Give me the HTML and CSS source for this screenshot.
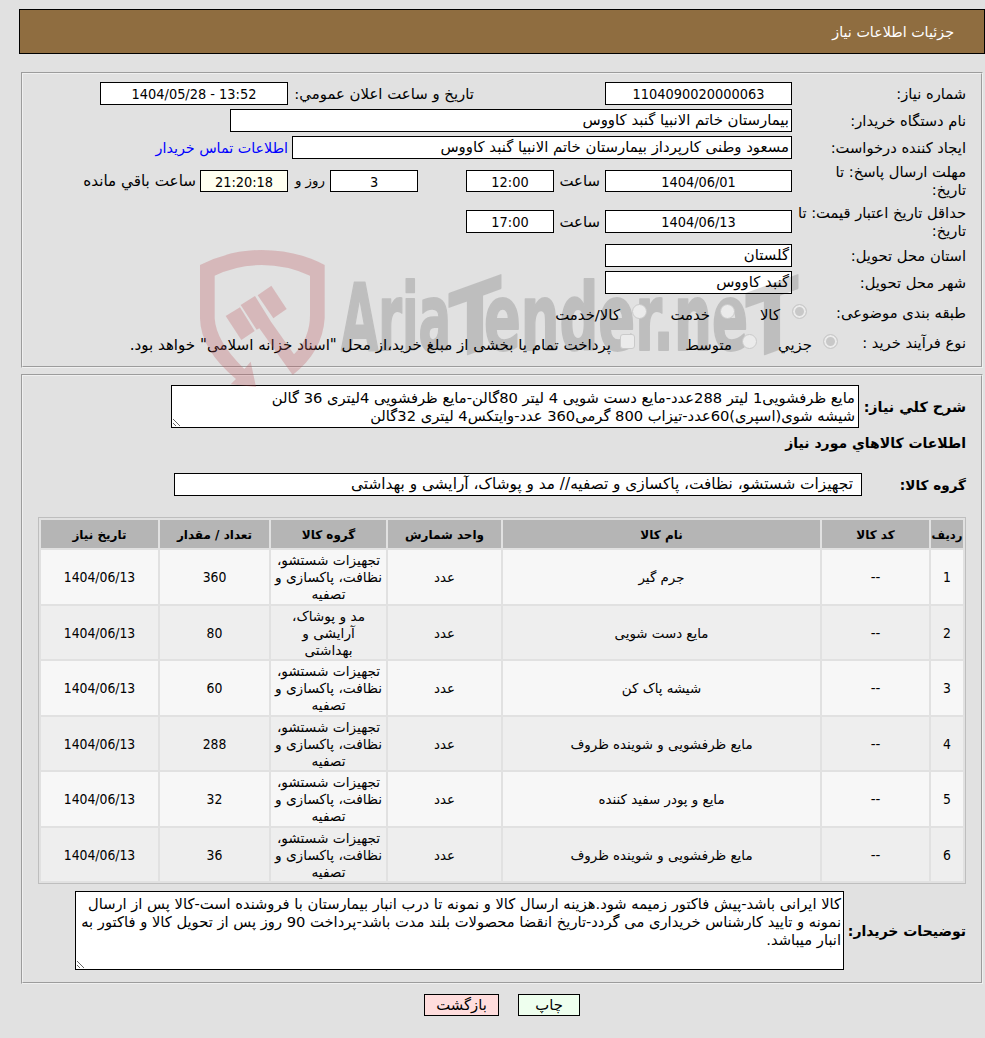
FILE: index.html
```html
<!DOCTYPE html>
<html lang="fa" dir="rtl">
  <head>
    <meta charset="UTF-8" />
    <meta name="viewport" content="width=device-width, initial-scale=1.0" />
    <title>جزئیات اطلاعات نیاز</title>
    <link rel="stylesheet" href="styles.css">
  </head>
  <body>
    <h1 class="title">جزئیات اطلاعات نیاز</h1>

    <!-- Need info -->
    <section class="box info">
      <div class="row">
        <span class="label">شماره نیاز:</span>
        <span class="field num w-main">1104090020000063</span>
        <span class="text announce">تاریخ و ساعت اعلان عمومي:</span>
        <span class="field num w-date" dir="ltr">1404/05/28 - 13:52</span>
      </div>
      <div class="row">
        <span class="label">نام دستگاه خریدار:</span>
        <span class="field w-org">بیمارستان خاتم الانبیا گنبد کاووس</span>
      </div>
      <div class="row">
        <span class="label">ایجاد کننده درخواست:</span>
        <span class="field w-user">مسعود وطنی کارپرداز بیمارستان خاتم الانبیا گنبد کاووس</span>
        <a class="contact" href="#">اطلاعات تماس خریدار</a>
      </div>
      <div class="row tall">
        <span class="label">مهلت ارسال پاسخ: تا<br>تاریخ:</span>
        <span class="field num w-main">1404/06/01</span>
        <span class="text hour">ساعت</span>
        <span class="field num w-small">12:00</span>
        <span class="field num w-small days">3</span>
        <span class="text and">روز و</span>
        <span class="field num w-small left">21:20:18</span>
        <span class="text remain">ساعت باقي مانده</span>
      </div>
      <div class="row taller">
        <span class="label">حداقل تاریخ اعتبار قیمت: تا<br>تاریخ:</span>
        <span class="field num w-main">1404/06/13</span>
        <span class="text hour">ساعت</span>
        <span class="field num w-small">17:00</span>
      </div>
      <div class="row">
        <span class="label">استان محل تحویل:</span>
        <span class="field w-main">گلستان</span>
      </div>
      <div class="row">
        <span class="label">شهر محل تحویل:</span>
        <span class="field w-main">گنبد کاووس</span>
      </div>
      <div class="row options kind">
        <span class="label short">طبقه بندی موضوعی:</span>
        <i class="radio on"></i><span class="opt k1">کالا</span>
        <i class="radio"></i><span class="opt k2">خدمت</span>
        <i class="radio"></i><span class="opt k3">کالا/خدمت</span>
      </div>
      <div class="row options process">
        <span class="label short">نوع فرآیند خرید :</span>
        <i class="radio on"></i><span class="opt p1">جزیي</span>
        <i class="radio"></i><span class="opt p2">متوسط</span>
        <i class="radio check"></i><span class="opt p3">پرداخت تمام یا بخشی از مبلغ خرید،از محل "اسناد خزانه اسلامی" خواهد بود.</span>
      </div>
    </section>

    <!-- Goods -->
    <section class="box goods">
      <div class="line desc">
        <b>شرح کلي نیاز:</b>
        <textarea class="area area-desc">مایع ظرفشویی1 لیتر 288عدد-مایع دست شویی 4 لیتر 80گالن-مایع ظرفشویی 4لیتری 36 گالن
شیشه شوی(اسپری)60عدد-تیزاب 800 گرمی360 عدد-وایتکس4 لیتری 32گالن</textarea>
      </div>
      <h2>اطلاعات کالاهاي مورد نیاز</h2>
      <div class="line group">
        <b>گروه کالا:</b>
        <span class="field w-group">تجهیزات شستشو، نظافت، پاکسازی و تصفیه// مد و پوشاک، آرایشی و بهداشتی</span>
      </div>

      <table>
        <colgroup>
          <col class="c1"><col class="c2"><col class="c3"><col class="c4"><col class="c5"><col class="c6"><col class="c7">
        </colgroup>
        <thead>
          <tr>
            <th>ردیف</th>
            <th>کد کالا</th>
            <th>نام کالا</th>
            <th>واحد شمارش</th>
            <th>گروه کالا</th>
            <th>تعداد / مقدار</th>
            <th>تاریخ نیاز</th>
          </tr>
        </thead>
        <tbody>
          <tr><td>1</td><td>--</td><td>جرم گیر</td><td>عدد</td><td>تجهیزات شستشو،<br>نظافت، پاکسازی و<br>تصفیه</td><td>360</td><td>1404/06/13</td></tr>
          <tr><td>2</td><td>--</td><td>مایع دست شویی</td><td>عدد</td><td>مد و پوشاک،<br>آرایشی و<br>بهداشتی</td><td>80</td><td>1404/06/13</td></tr>
          <tr><td>3</td><td>--</td><td>شیشه پاک کن</td><td>عدد</td><td>تجهیزات شستشو،<br>نظافت، پاکسازی و<br>تصفیه</td><td>60</td><td>1404/06/13</td></tr>
          <tr><td>4</td><td>--</td><td>مایع ظرفشویی و شوینده ظروف</td><td>عدد</td><td>تجهیزات شستشو،<br>نظافت، پاکسازی و<br>تصفیه</td><td>288</td><td>1404/06/13</td></tr>
          <tr><td>5</td><td>--</td><td>مایع و پودر سفید کننده</td><td>عدد</td><td>تجهیزات شستشو،<br>نظافت، پاکسازی و<br>تصفیه</td><td>32</td><td>1404/06/13</td></tr>
          <tr><td>6</td><td>--</td><td>مایع ظرفشویی و شوینده ظروف</td><td>عدد</td><td>تجهیزات شستشو،<br>نظافت، پاکسازی و<br>تصفیه</td><td>36</td><td>1404/06/13</td></tr>
        </tbody>
      </table>

      <div class="line notes">
        <b>توضیحات خریدار:</b>
        <textarea class="area area-notes">کالا ایرانی باشد-پیش فاکتور زمیمه شود.هزینه ارسال کالا و نمونه تا درب انبار بیمارستان با فروشنده است-کالا پس از ارسال
نمونه و تایید کارشناس خریداری می گردد-تاریخ انقضا محصولات بلند مدت باشد-پرداخت 90 روز پس از تحویل کالا و فاکتور به
انبار میباشد.</textarea>
      </div>
    </section>

    <div class="buttons">
      <button class="btn btn-print">چاپ</button>
      <button class="btn btn-back">بازگشت</button>
    </div>

    <!-- Watermark over the form -->
    <svg class="watermark" viewBox="0 0 630 155" direction="ltr">
      <g class="wm-red" transform="scale(0.33333)">
        <path d="M338 420L238 280L230 284L182 210L225 183L273 260L342 358Q390 310 390 240V122Q320 90 245 90Q170 90 104 122V250Q108 320 193 402L212 380L228 456L152 448L168 432Q62 345 60 250V90Q150 45 245 45Q350 45 434 90V250Q428 350 338 420Z" />
        <path d="M137 243L180 217L224 288L184 315Z" />
        <path d="M233 181L274 152L320 222L280 250Z" />
      </g>
      <g class="wm-text">
        <text x="161" y="115" textLength="110" lengthAdjust="spacingAndGlyphs">Aria</text>
        <text transform="translate(269 126) skewY(-20)" x="0" y="0" textLength="52" lengthAdjust="spacingAndGlyphs">T</text>
        <text x="304" y="115" textLength="190" lengthAdjust="spacingAndGlyphs">ender.</text>
        <text x="494" y="115" textLength="74" lengthAdjust="spacingAndGlyphs">ne</text>
        <text transform="translate(566 126) skewY(-20)" x="0" y="0" textLength="52" lengthAdjust="spacingAndGlyphs">T</text>
      </g>
    </svg>
  </body>
</html>
```
FILE: styles.css
```css
* {
  box-sizing: border-box;
}

body {
  position: relative;
  margin: 0;
  padding: 9px 0 0 19px;
  width: 985px;
  height: 1038px;
  overflow: hidden;
  background-color: #e1e1e1;
  color: #000;
  font-family: "DejaVu Sans", sans-serif;
  font-size: 14.9px;
  line-height: 18px;
}

.title {
  margin: 0 0 18px;
  height: 45px;
  padding-right: 30px;
  border: 1px solid #000;
  background-color: #8f6d40;
  color: #fff;
  font-size: 14.3px;
  font-weight: normal;
  line-height: 44px;
}

.box {
  margin: 0 2px 6px;
  padding: 6px 15px 0 0;
  border: 2px groove #f0f0f0;
}

.info {
  height: 296px;
}

.goods {
  height: 610px;
  padding-top: 9px;
}

/* Form rows */
.row {
  display: flex;
  align-items: center;
  height: 27px;
  white-space: nowrap;
}

.row.tall {
  height: 40px;
}

.row.taller {
  height: 41px;
}

.label {
  width: 174px;
  flex: none;
  font-size: 14.7px;
}

.field {
  flex: none;
  height: 23px;
  padding: 0 2px;
  border: 1px solid #000;
  background-color: #fff;
  line-height: 21px;
  white-space: nowrap;
}

.num {
  font-family: "DejaVu Sans Condensed", "DejaVu Sans", sans-serif;
  font-size: 14.4px;
  line-height: 22px;
  text-align: center;
}

.tall .field {
  height: 22px;
}

.w-main {
  width: 187px;
}

.w-date {
  width: 188px;
}

.w-org {
  width: 562px;
}

.w-user {
  width: 500px;
}

.w-small {
  width: 88px;
}

.w-group {
  width: 688px;
  padding-right: 8px;
  font-size: 15.3px;
}

.announce {
  width: 186px;
  margin-right: 131px;
}

.contact {
  margin-right: 4px;
  color: #00f;
  font-size: 14.3px;
  text-decoration: none;
}

.hour {
  width: 46px;
  margin-right: 5px;
}

.days {
  margin-right: 48px;
}

.and {
  width: 37px;
  margin-right: 5px;
  font-size: 13.4px;
}

.left {
  background-color: #fffff0;
}

.remain {
  margin-right: 4px;
  font-size: 15.2px;
}

/* Disabled radios and checkbox */
.options.kind {
  height: 33px;
}

.options.process {
  height: 27px;
}

.radio {
  position: relative;
  z-index: 2;
  flex: none;
  width: 15px;
  height: 15px;
  margin-top: -2px;
  border: 1px solid #cacaca;
  border-radius: 50%;
  background-color: #ebebeb;
}

.radio.on {
  background-color: #c8c8c8;
  box-shadow: inset 0 0 0 2px #ebebeb;
}

.radio.check {
  border-radius: 3px;
}

.kind .short {
  width: 159px;
}

.process .short {
  width: 128px;
}

.opt {
  flex: none;
  padding-top: 4px;
}

.k1 {
  width: 57px;
  padding-right: 12px;
}

.k2 {
  width: 73px;
  padding-right: 10px;
}

.k3 {
  padding-right: 12px;
}

.p1 {
  width: 66px;
  padding-right: 11px;
}

.p2 {
  width: 107px;
  padding-right: 10px;
}

.p3 {
  padding-right: 9px;
  font-size: 15.1px;
}

/* Goods section */
.line {
  display: flex;
  align-items: center;
  white-space: nowrap;
}

.line b,
h2 {
  font-size: 14px;
  line-height: 18px;
}

h2 {
  margin: 6px 0 21px;
}

.desc b {
  width: 107px;
  font-size: 14.3px;
}

.group b {
  width: 104px;
  font-size: 13.6px;
}

.notes b {
  width: 122px;
}

.area {
  display: block;
  margin: 0;
  padding: 3px 2px 2px;
  border: 1px solid #000;
  background-color: #fff;
  color: #000;
  font: inherit;
  font-size: 14.7px;
  line-height: 18px;
  white-space: pre;
  overflow: hidden;
}

.area-desc {
  width: 688px;
  height: 43px;
  padding-right: 3px;
}

.area-notes {
  width: 769px;
  height: 79px;
}

table {
  width: 928px;
  margin: 21px 0 7px;
  border: 1px solid #bebebe;
  border-spacing: 2px;
  table-layout: fixed;
  font-size: 13.4px;
  line-height: 17px;
  text-align: center;
}

.c1 { width: 32px; }
.c2 { width: 107px; }
.c3 { width: 317px; }
.c4 { width: 113px; }
.c5 { width: 115px; }
.c6 { width: 109px; }
.c7 { width: 117px; }

th {
  height: 28px;
  padding: 2px 0 0;
  background-color: #b5b5b5;
  font-size: 12px;
  white-space: nowrap;
}

td {
  height: 53.5px;
  padding: 2px 0 0;
  background-color: #f7f7f7;
  white-space: nowrap;
}

th:first-child {
  font-size: 11.6px;
}

td:nth-child(5) {
  font-size: 13.7px;
}

td:nth-child(1),
td:nth-child(6),
td:nth-child(7) {
  font-family: "DejaVu Sans Condensed", "DejaVu Sans", sans-serif;
  font-size: 13.8px;
}

tbody tr:nth-child(even) td {
  background-color: #eee;
}

/* Buttons */
.buttons {
  display: flex;
  gap: 19px;
  margin-top: 10px;
  padding-right: 405px;
}

.btn {
  height: 22px;
  padding: 0;
  border: 1px solid #000;
  font-family: inherit;
  font-size: 14.8px;
  line-height: 20px;
}

.btn-print {
  width: 62px;
  background-color: #eeffee;
}

.btn-back {
  width: 75px;
  background-color: #ffdddd;
}

/* Watermark */
.watermark {
  position: absolute;
  left: 180px;
  top: 235px;
  width: 630px;
  height: 155px;
  pointer-events: none;
}

.wm-red {
  fill: rgba(187, 80, 85, 0.28);
}

.wm-text {
  fill: #000;
  stroke: #000;
  stroke-width: 2;
  stroke-linejoin: round;
  opacity: 0.15;
  font-family: "DejaVu Sans Condensed", "DejaVu Sans", sans-serif;
  font-size: 92px;
  font-weight: bold;
  direction: ltr;
}
```
